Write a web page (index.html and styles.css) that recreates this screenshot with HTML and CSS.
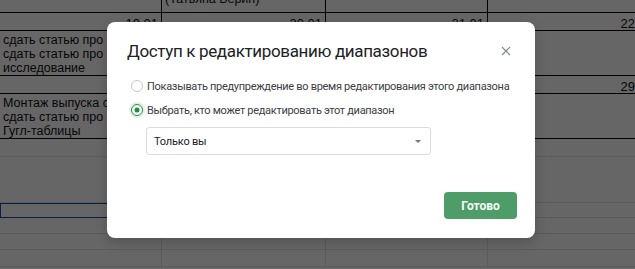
FILE: index.html
```html
<!DOCTYPE html>
<html lang="ru">
<head>
    <meta charset="UTF-8">
    <title>Доступ к редактированию диапазонов</title>
    <link rel="stylesheet" href="styles.css">
</head>
<body>
    <!-- Spreadsheet behind the modal -->
    <div class="sheet">
        <div class="row row-a bold">
            <div class="cell"></div>
            <div class="cell"><span class="clip">(Татьяна Берин)</span></div>
            <div class="cell"></div>
            <div class="cell"></div>
        </div>
        <div class="row row-b bold">
            <div class="cell num">19.01</div>
            <div class="cell num">20.01</div>
            <div class="cell num">21.01</div>
            <div class="cell num">22.01</div>
        </div>
        <div class="row row-c bold">
            <div class="cell text">
                <span>сдать статью про подкасты</span>
                <span>сдать статью про</span>
                <span>исследование</span>
            </div>
            <div class="cell"></div>
            <div class="cell"></div>
            <div class="cell"></div>
        </div>
        <div class="row row-b bold">
            <div class="cell"></div>
            <div class="cell"></div>
            <div class="cell"></div>
            <div class="cell num">29.01</div>
        </div>
        <div class="row row-c bold">
            <div class="cell text">
                <span>Монтаж выпуска с</span>
                <span>сдать статью про</span>
                <span>Гугл-таблицы</span>
            </div>
            <div class="cell"></div>
            <div class="cell"></div>
            <div class="cell"></div>
        </div>
        <div class="row row-d">
            <div class="cell"></div><div class="cell"></div><div class="cell"></div><div class="cell"></div>
        </div>
        <div class="row row-e">
            <div class="cell"></div><div class="cell"></div><div class="cell"></div><div class="cell"></div>
        </div>
        <div class="row row-f">
            <div class="cell selected"></div><div class="cell"></div><div class="cell"></div><div class="cell"></div>
        </div>
        <div class="row row-g">
            <div class="cell"></div><div class="cell"></div><div class="cell"></div><div class="cell"></div>
        </div>
        <div class="row row-g">
            <div class="cell"></div><div class="cell"></div><div class="cell"></div><div class="cell"></div>
        </div>
        <div class="row row-h">
            <div class="cell"></div><div class="cell"></div><div class="cell"></div><div class="cell"></div>
        </div>
    </div>

    <div class="overlay"></div>

    <!-- Protected range dialog -->
    <div class="dialog">
        <div class="dialog-header">
            <h1 class="dialog-title">Доступ к редактированию диапазонов</h1>
            <button class="close-btn" aria-label="Закрыть">
                <svg width="10" height="10" viewBox="0 0 10 10">
                    <path d="M1 1 L9 9 M9 1 L1 9" stroke="#80868b" stroke-width="1.1" fill="none"/>
                </svg>
            </button>
        </div>

        <label class="radio-item">
            <input type="radio" name="mode" hidden>
            <span class="radio-circle"></span>
            <span class="radio-label">Показывать предупреждение во время редактирования этого диапазона</span>
        </label>
        <label class="radio-item checked">
            <input type="radio" name="mode" checked hidden>
            <span class="radio-circle"></span>
            <span class="radio-label">Выбрать, кто может редактировать этот диапазон</span>
        </label>

        <div class="select-box">
            <span class="select-value">Только вы</span>
            <span class="select-arrow"></span>
        </div>

        <div class="dialog-footer">
            <button class="btn-done">Готово</button>
        </div>
    </div>
</body>
</html>
```

FILE: styles.css
```css
* {
    margin: 0;
    padding: 0;
    box-sizing: border-box;
}

body {
    width: 635px;
    height: 269px;
    overflow: hidden;
    position: relative;
    background-color: #fff;
    font-family: 'Liberation Sans', Arial, sans-serif;
}

/* Spreadsheet */
.sheet {
    display: flex;
    flex-direction: column;
}

.row {
    display: flex;
}

.cell {
    flex-shrink: 0;
    width: 162px;
    border-right: 1px solid #e2e3e3;
    border-bottom: 1px solid #e2e3e3;
    font-size: 12.5px;
    line-height: 14px;
    color: #111;
    overflow: hidden;
    display: flex;
    flex-direction: column;
    justify-content: flex-end;
    padding: 0 3px 0;
}

.cell:nth-child(2) { width: 164px; }
.cell:nth-child(4) { width: 169px; }

.bold .cell {
    border-color: #000;
}

.row-a { height: 13px; }
.row-b { height: 18px; }
.row-c { height: 45px; }
.row-d { height: 18px; }
.row-e { height: 46px; }
.row-f { height: 15px; }
.row-g { height: 16px; }
.row-h { height: 17px; }

.row-a .cell { padding-bottom: 6px; }

.clip {
    white-space: nowrap;
}

.num {
    text-align: right;
    font-size: 13px;
    line-height: 13px;
}

.text span {
    white-space: nowrap;
}

.cell.selected {
    border: 1.5px solid #1a4fb0;
}

.overlay {
    position: absolute;
    inset: 0;
    background: rgba(0, 0, 0, 0.6);
}

/* Dialog */
.dialog {
    position: absolute;
    left: 107px;
    top: 22px;
    width: 428px;
    height: 216px;
    background-color: #fff;
    border-radius: 8px;
    box-shadow: 0 4px 12px rgba(0, 0, 0, 0.2);
    padding: 17px 18px 19px 20px;
    display: flex;
    flex-direction: column;
    font-family: Roboto, 'Noto Sans', sans-serif;
}

.dialog-header {
    display: flex;
    justify-content: space-between;
    align-items: center;
    height: 24px;
    margin-bottom: 11px;
}

.dialog-title {
    font-size: 17px;
    letter-spacing: -0.35px;
    line-height: 24px;
    font-weight: 400;
    color: #202124;
}

.close-btn {
    border: none;
    background: none;
    width: 20px;
    height: 20px;
    display: flex;
    align-items: center;
    justify-content: center;
    margin-right: 1px;
    cursor: pointer;
}

.radio-item {
    display: flex;
    align-items: center;
    height: 24px;
    padding-left: 4px;
    cursor: pointer;
}

.radio-circle {
    width: 12px;
    height: 12px;
    border: 1px solid #c4c7c5;
    border-radius: 50%;
    margin-right: 4px;
    position: relative;
    flex-shrink: 0;
}

.radio-item.checked .radio-circle {
    border: 1.5px solid #1e8e3e;
    box-shadow: 0 0 0 2px rgba(30, 142, 62, 0.12);
}

.radio-item.checked .radio-circle::after {
    content: '';
    position: absolute;
    width: 5px;
    height: 5px;
    top: 50%;
    left: 50%;
    transform: translate(-50%, -50%);
    background-color: #1e8e3e;
    border-radius: 50%;
}

.radio-label {
    font-size: 11px;
    letter-spacing: -0.3px;
    white-space: nowrap;
    color: #3c4043;
}

.select-box {
    margin: 5px 0 0 19px;
    width: 285px;
    height: 28px;
    border: 1px solid #dadce0;
    border-radius: 3px;
    display: flex;
    align-items: center;
    justify-content: space-between;
    padding: 0 9px 0 7px;
}

.select-value {
    font-size: 11px;
    letter-spacing: -0.2px;
    color: #202124;
}

.select-arrow {
    width: 0;
    height: 0;
    border-left: 3.5px solid transparent;
    border-right: 3.5px solid transparent;
    border-top: 3.5px solid #757575;
}

.dialog-footer {
    margin-top: auto;
    display: flex;
    justify-content: flex-end;
}

.btn-done {
    width: 73px;
    height: 27px;
    border: none;
    border-radius: 4px;
    background-color: #4e9c68;
    color: #f4fbf6;
    font-family: Roboto, sans-serif;
    font-size: 12px;
    font-weight: 700;
    cursor: pointer;
}
```
